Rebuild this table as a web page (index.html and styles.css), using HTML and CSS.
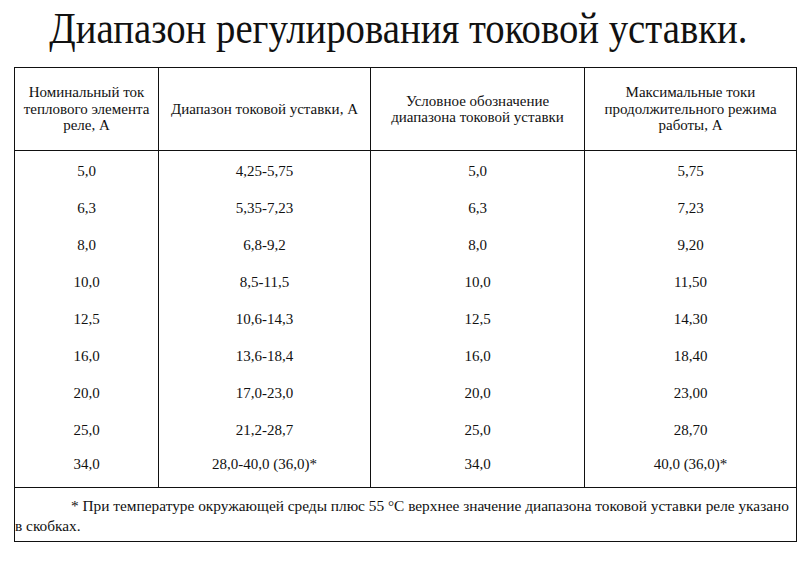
FILE: index.html
```html
<!DOCTYPE html>
<html lang="ru">
<head>
<meta charset="utf-8">
<link rel="stylesheet" href="styles.css">
</head>
<body>
<h1 class="title"><span class="title-text">Диапазон регулирования токовой уставки.</span></h1>
<table class="grid">
  <colgroup>
    <col class="c1"><col class="c2"><col class="c3"><col class="c4">
  </colgroup>
  <thead>
    <tr class="head">
      <th>Номинальный ток теплового элемента реле, А</th>
      <th>Диапазон токовой уставки, А</th>
      <th>Условное обозначение диапазона токовой уставки</th>
      <th>Максимальные токи продолжительного режима работы, А</th>
    </tr>
  </thead>
  <tbody>
    <tr><td>5,0</td><td>4,25-5,75</td><td>5,0</td><td>5,75</td></tr>
    <tr><td>6,3</td><td>5,35-7,23</td><td>6,3</td><td>7,23</td></tr>
    <tr><td>8,0</td><td>6,8-9,2</td><td>8,0</td><td>9,20</td></tr>
    <tr><td>10,0</td><td>8,5-11,5</td><td>10,0</td><td>11,50</td></tr>
    <tr><td>12,5</td><td>10,6-14,3</td><td>12,5</td><td>14,30</td></tr>
    <tr><td>16,0</td><td>13,6-18,4</td><td>16,0</td><td>18,40</td></tr>
    <tr><td>20,0</td><td>17,0-23,0</td><td>20,0</td><td>23,00</td></tr>
    <tr><td>25,0</td><td>21,2-28,7</td><td>25,0</td><td>28,70</td></tr>
    <tr class="last"><td>34,0</td><td>28,0-40,0 (36,0)*</td><td>34,0</td><td>40,0 (36,0)*</td></tr>
    <tr class="note"><td colspan="4"><p class="note-text">* При температуре окружающей среды плюс 55 °С верхнее значение диапазона токовой уставки реле указано в скобках.</p></td></tr>
  </tbody>
</table>
</body>
</html>
```

FILE: styles.css
```css
html, body {
  margin: 0;
  padding: 0;
  background: #fff;
  color: #111;
  font-family: "Liberation Serif", "Times New Roman", serif;
}

.title {
  margin: 0;
  height: 67px;
  text-align: center;
  font-weight: normal;
  font-size: 45px;
  line-height: 56px;
  white-space: nowrap;
}

.title-text {
  display: inline-block;
  transform: translateX(-7px) scaleX(0.861);
  transform-origin: center;
}

.grid {
  margin-left: 14px;
  width: 782px;
  table-layout: fixed;
  border-collapse: collapse;
  font-size: 15px;
}

.c1 { width: 144px; }
.c2 { width: 212px; }
.c3 { width: 214px; }
.c4 { width: 212px; }

.grid th,
.grid td {
  border-left: 1.5px solid #111;
  border-right: 1.5px solid #111;
  text-align: center;
  padding: 0;
}

.head th {
  height: 82px;
  font-weight: normal;
  font-size: 15px;
  line-height: 16.5px;
  padding: 0 6px;
  border: 1.5px solid #111;
}

.grid tbody td {
  height: 33px;
  padding-top: 4px;
}

.grid tbody tr.last td {
  height: 34px;
  padding-top: 0;
  padding-bottom: 6px;
}

.grid tbody .note td {
  height: 53px;
  padding: 0;
  border: 1.5px solid #111;
  text-align: left;
  vertical-align: top;
}

.note-text {
  margin: 8px 0 0;
  text-indent: 56px;
  line-height: 20px;
  font-size: 15.35px;
}
```
